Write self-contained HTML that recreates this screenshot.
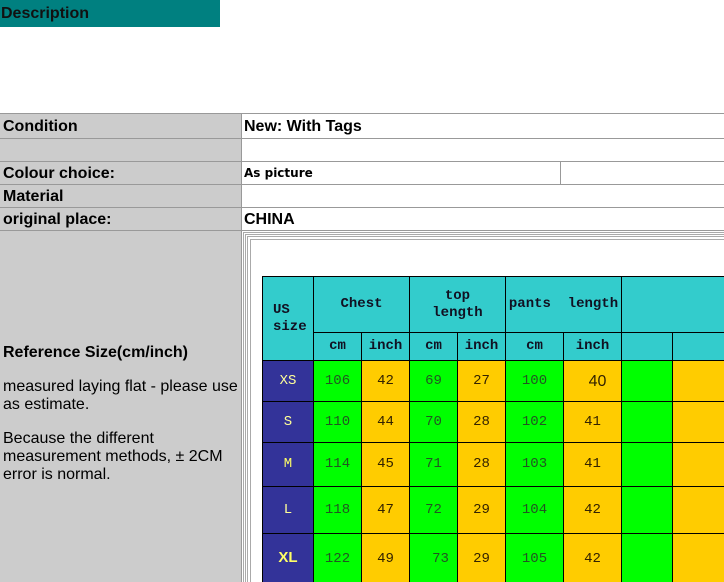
<!DOCTYPE html>
<html style="height:582px;overflow:hidden"><head><meta charset="utf-8"><style>
*{margin:0;padding:0;box-sizing:border-box}
body{width:724px;height:582px;overflow:hidden;background:#fff;font-family:"Liberation Sans",Arial,sans-serif;position:relative}
.a{position:absolute}
.hd{left:0;top:0;width:220px;height:27px;background:#008080;font-weight:bold;font-size:16px;color:#111;padding:5px 1px}
.g{background:#ccc}
.hl{height:1px;background:#999;left:0;width:724px}
.lab{left:3px;font-weight:bold;font-size:16px;color:#000}
.c{position:absolute;border:1px solid #000;display:flex;align-items:center;justify-content:center;font-family:"Liberation Mono","Noto Serif CJK SC",monospace;font-size:14px;color:#222;text-align:center;line-height:17px}
.t{background:#33cccc;font-weight:bold;color:#112}
.n{background:#333399;color:#ffff99}
.gr{background:#00ff00;color:#225522}
.y{background:#ffcc00;color:#332200}
</style></head><body>
<div class="a hd">Description</div>
<div class="a g" style="left:0;top:113px;width:242px;height:469px"></div>
<div class="a" style="left:241px;top:113px;width:1px;height:469px;background:#999"></div>
<div class="a hl" style="top:113px"></div>
<div class="a hl" style="top:138px"></div>
<div class="a hl" style="top:161px"></div>
<div class="a hl" style="top:184px"></div>
<div class="a hl" style="top:207px"></div>
<div class="a hl" style="top:230px"></div>
<div class="a" style="left:560px;top:161px;width:1px;height:23px;background:#999"></div>
<div class="a lab" style="top:118px">Condition</div>
<div class="a lab" style="left:244px;top:118px">New: With Tags</div>
<div class="a lab" style="top:165px">Colour choice:</div>
<div class="a" style="left:244px;top:166px;font-weight:bold;font-size:12px;font-family:'DejaVu Sans',sans-serif">As picture</div>
<div class="a lab" style="top:188px">Material</div>
<div class="a lab" style="top:211px">original place:</div>
<div class="a lab" style="left:244px;top:211px">CHINA</div>
<div class="a lab" style="top:344px">Reference Size(cm/inch)</div>
<div class="a" style="left:3px;top:378px;font-size:16px;line-height:18px;width:238px">measured laying flat - please use as estimate.</div>
<div class="a" style="left:3px;top:430px;font-size:16px;line-height:18px;width:238px">Because the different measurement methods, ± 2CM error is normal.</div>
<div class="a" style="left:243px;top:232px;width:490px;height:360px;border:1px solid #aaa"></div>
<div class="a" style="left:245px;top:234px;width:490px;height:360px;border:1px solid #aaa"></div>
<div class="a" style="left:247px;top:236px;width:490px;height:360px;border:1px solid #aaa"></div>
<div class="a" style="left:250px;top:239px;width:490px;height:360px;border:1px solid #aaa"></div>
<div class="c t" style="left:262px;top:276px;width:52px;height:85px;justify-content:flex-start;padding-left:10px;text-align:left">US<br>size</div>
<div class="c t" style="left:313px;top:276px;width:97px;height:57px">Chest</div>
<div class="c t" style="left:409px;top:276px;width:97px;height:57px">top<br>length</div>
<div class="c t" style="left:505px;top:276px;width:117px;height:57px">pants&nbsp; length</div>
<div class="c t" style="left:621px;top:276px;width:110px;height:57px"></div>
<div class="c t" style="left:313px;top:332px;width:49px;height:29px">cm</div>
<div class="c t" style="left:361px;top:332px;width:49px;height:29px">inch</div>
<div class="c t" style="left:409px;top:332px;width:49px;height:29px">cm</div>
<div class="c t" style="left:457px;top:332px;width:49px;height:29px">inch</div>
<div class="c t" style="left:505px;top:332px;width:59px;height:29px">cm</div>
<div class="c t" style="left:563px;top:332px;width:59px;height:29px">inch</div>
<div class="c t" style="left:621px;top:332px;width:52px;height:29px"></div>
<div class="c t" style="left:672px;top:332px;width:60px;height:29px"></div>

<div class="c n" style="left:262px;top:360px;width:52px;height:42px">XS</div>
<div class="c gr" style="left:313px;top:360px;width:49px;height:42px">106</div>
<div class="c y" style="left:361px;top:360px;width:49px;height:42px">42</div>
<div class="c gr" style="left:409px;top:360px;width:49px;height:42px">69</div>
<div class="c y" style="left:457px;top:360px;width:49px;height:42px">27</div>
<div class="c gr" style="left:505px;top:360px;width:59px;height:42px">100</div>
<div class="c y" style="left:563px;top:360px;width:59px;height:42px;font-family:'Liberation Sans';font-size:16px;padding-left:10px">40</div>
<div class="c gr" style="left:621px;top:360px;width:52px;height:42px"></div>
<div class="c y" style="left:672px;top:360px;width:60px;height:42px"></div>

<div class="c n" style="left:262px;top:401px;width:52px;height:42px">S</div>
<div class="c gr" style="left:313px;top:401px;width:49px;height:42px">110</div>
<div class="c y" style="left:361px;top:401px;width:49px;height:42px">44</div>
<div class="c gr" style="left:409px;top:401px;width:49px;height:42px">70</div>
<div class="c y" style="left:457px;top:401px;width:49px;height:42px">28</div>
<div class="c gr" style="left:505px;top:401px;width:59px;height:42px">102</div>
<div class="c y" style="left:563px;top:401px;width:59px;height:42px">41</div>
<div class="c gr" style="left:621px;top:401px;width:52px;height:42px"></div>
<div class="c y" style="left:672px;top:401px;width:60px;height:42px"></div>

<div class="c n" style="left:262px;top:442px;width:52px;height:45px;color:#ffff66">M</div>
<div class="c gr" style="left:313px;top:442px;width:49px;height:45px">114</div>
<div class="c y" style="left:361px;top:442px;width:49px;height:45px">45</div>
<div class="c gr" style="left:409px;top:442px;width:49px;height:45px">71</div>
<div class="c y" style="left:457px;top:442px;width:49px;height:45px">28</div>
<div class="c gr" style="left:505px;top:442px;width:59px;height:45px">103</div>
<div class="c y" style="left:563px;top:442px;width:59px;height:45px">41</div>
<div class="c gr" style="left:621px;top:442px;width:52px;height:45px"></div>
<div class="c y" style="left:672px;top:442px;width:60px;height:45px"></div>

<div class="c n" style="left:262px;top:486px;width:52px;height:48px">L</div>
<div class="c gr" style="left:313px;top:486px;width:49px;height:48px">118</div>
<div class="c y" style="left:361px;top:486px;width:49px;height:48px">47</div>
<div class="c gr" style="left:409px;top:486px;width:49px;height:48px">72</div>
<div class="c y" style="left:457px;top:486px;width:49px;height:48px">29</div>
<div class="c gr" style="left:505px;top:486px;width:59px;height:48px">104</div>
<div class="c y" style="left:563px;top:486px;width:59px;height:48px">42</div>
<div class="c gr" style="left:621px;top:486px;width:52px;height:48px"></div>
<div class="c y" style="left:672px;top:486px;width:60px;height:48px"></div>

<div class="c n" style="left:262px;top:533px;width:52px;height:60px;font-family:'Liberation Sans';font-weight:bold;font-size:15px;color:#ffff66;align-items:flex-start;padding-top:15px">XL</div>
<div class="c gr" style="left:313px;top:533px;width:49px;height:60px;align-items:flex-start;padding-top:17px">122</div>
<div class="c y" style="left:361px;top:533px;width:49px;height:60px;align-items:flex-start;padding-top:17px">49</div>
<div class="c gr" style="left:409px;top:533px;width:49px;height:60px;align-items:flex-start;padding-top:17px;padding-left:14px">73</div>
<div class="c y" style="left:457px;top:533px;width:49px;height:60px;align-items:flex-start;padding-top:17px">29</div>
<div class="c gr" style="left:505px;top:533px;width:59px;height:60px;align-items:flex-start;padding-top:17px">105</div>
<div class="c y" style="left:563px;top:533px;width:59px;height:60px;align-items:flex-start;padding-top:17px">42</div>
<div class="c gr" style="left:621px;top:533px;width:52px;height:60px"></div>
<div class="c y" style="left:672px;top:533px;width:60px;height:60px"></div>
</body></html>
